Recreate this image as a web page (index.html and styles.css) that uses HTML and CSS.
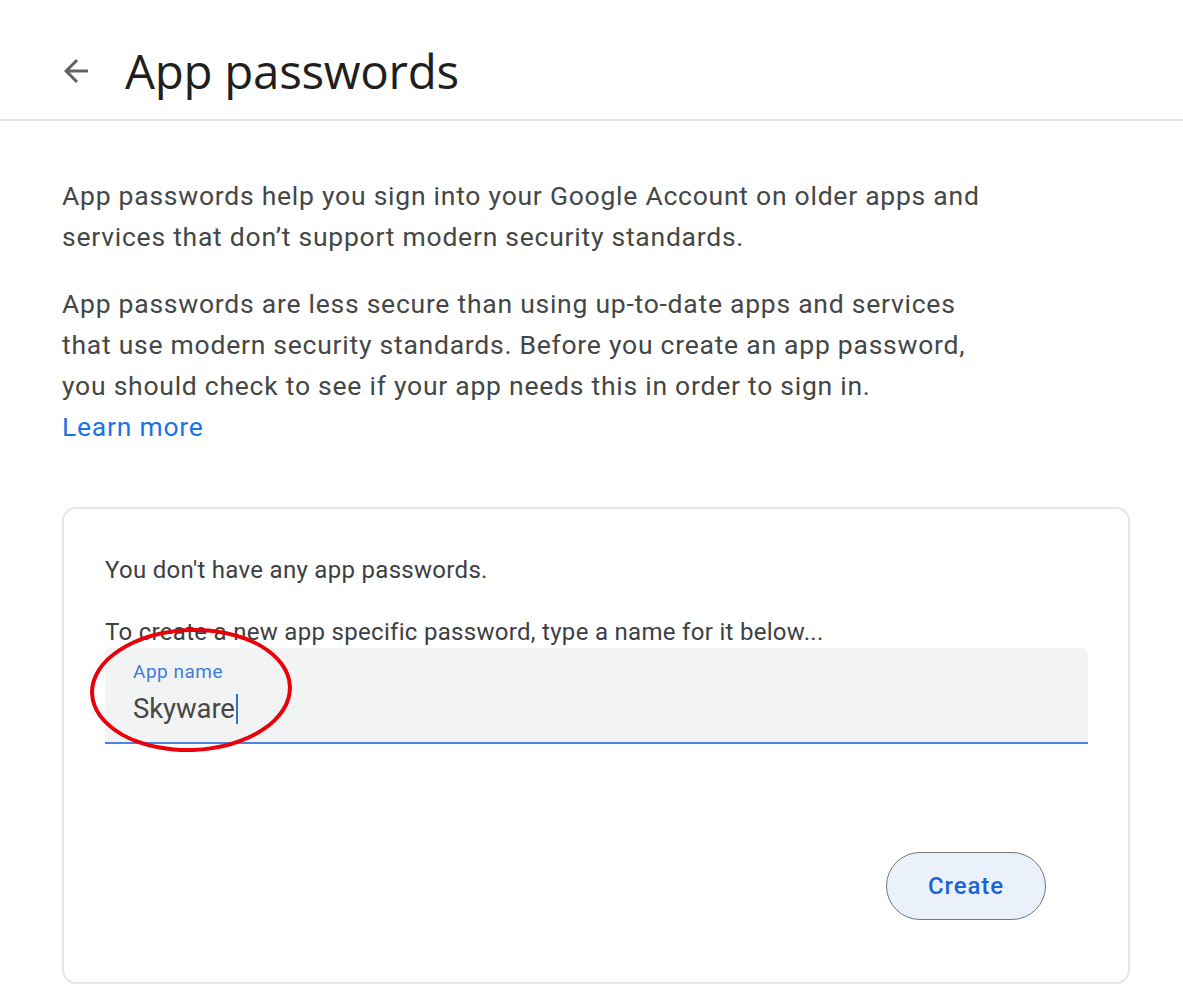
FILE: index.html
```
<!DOCTYPE html>
<html>
<head>
<meta charset="utf-8">
<link rel="stylesheet" href="styles.css">
</head>
<body>
<header class="top">
  <svg class="back" viewBox="0 0 24 24" width="36" height="36"><path d="M20 11H7.83l5.59-5.59L12 4l-8 8 8 8 1.41-1.41L7.83 13H20v-2z" fill="#5f6368"/></svg>
  <h1 class="title">App passwords</h1>
</header>
<main class="content">
  <p class="para">App passwords help you sign into your Google Account on older apps and<br>services that don’t support modern security standards.</p>
  <p class="para">App passwords are less secure than using up-to-date apps and services<br>that use modern security standards. Before you create an app password,<br>you should check to see if your app needs this in order to sign in.<br><a class="link" href="#">Learn more</a></p>
  <section class="card">
    <p class="note">You don't have any app passwords.</p>
    <p class="note note2">To create a new app specific password, type a name for it below...</p>
    <div class="field">
      <div class="label">App name</div>
      <div class="value">Skyware<span class="caret"></span></div>
      <div class="circle"></div>
    </div>
    <div class="actions">
      <button class="create">Create</button>
    </div>
  </section>
</main>
</body>
</html>
```
FILE: styles.css
```
html, body { margin: 0; padding: 0; background: #fff; }
body { font-family: Roboto, "Liberation Sans", sans-serif; color: #3c4043; }
.top {
  height: 121px;
  border-bottom: 2px solid #e3e3e3;
  display: flex;
  align-items: center;
  padding-left: 58px;
  padding-top: 22px;
  box-sizing: border-box;
}
.back { margin-right: 31px; margin-top: 0; }
.title {
  margin: 0;
  font-family: "Open Sans", Roboto, sans-serif;
  font-weight: 400;
  font-size: 47.5px;
  color: #1f1f1f;
  letter-spacing: -0.3px;
  line-height: 60px;
}
.content { padding: 0 53px 0 62px; }
.para {
  margin: 0;
  font-size: 26.5px;
  letter-spacing: 0.75px;
  line-height: 41px;
  color: #444746;
}
.para:first-child { margin-top: 54px; }
.para + .para { margin-top: 26px; }
.link { color: #1a73e8; text-decoration: none; }
.card {
  margin-top: 60px;
  border: 2px solid #e6e6e6;
  border-radius: 14px;
  height: 477px;
  box-sizing: border-box;
  padding: 47px 40px 0 41px;
}
.note {
  margin: 0;
  font-size: 24px;
  letter-spacing: 0.3px;
  line-height: 28px;
  color: #3c4043;
}
.note2 { margin-top: 34px; }
.field {
  position: relative;
  margin-top: 2px;
  height: 96px;
  background: #f1f3f4;
  border-radius: 6px 6px 0 0;
  border-bottom: 2px solid #4a86e0;
  box-sizing: border-box;
  padding: 13px 0 0 28px;
}
.label { font-size: 19px; letter-spacing: 0.5px; color: #3b7ddd; line-height: 22px; }
.value {
  font-size: 27.5px;
  letter-spacing: -0.1px;
  line-height: 36px;
  color: #474747;
  margin-top: 8px;
  display: flex;
  align-items: center;
}
.caret { display: inline-block; width: 2px; height: 30px; background: #2f6fd6; margin-left: 1px; }
.circle {
  position: absolute;
  left: -15px;
  top: -20px;
  width: 202px;
  height: 124px;
  border: 4px solid #e8000b;
  border-radius: 50%;
  box-sizing: border-box;
  transform: rotate(-2deg);
}
.actions { display: flex; justify-content: flex-end; padding-top: 108px; padding-right: 42px; }
.create {
  width: 160px;
  height: 68px;
  border-radius: 34px;
  background: #eaf1fb;
  border: 1.5px solid #747775;
  color: #1a64d6;
  font-family: Roboto, sans-serif;
  font-size: 24px;
  letter-spacing: 0.9px;
  font-weight: 500;
  padding: 0;
}
```
